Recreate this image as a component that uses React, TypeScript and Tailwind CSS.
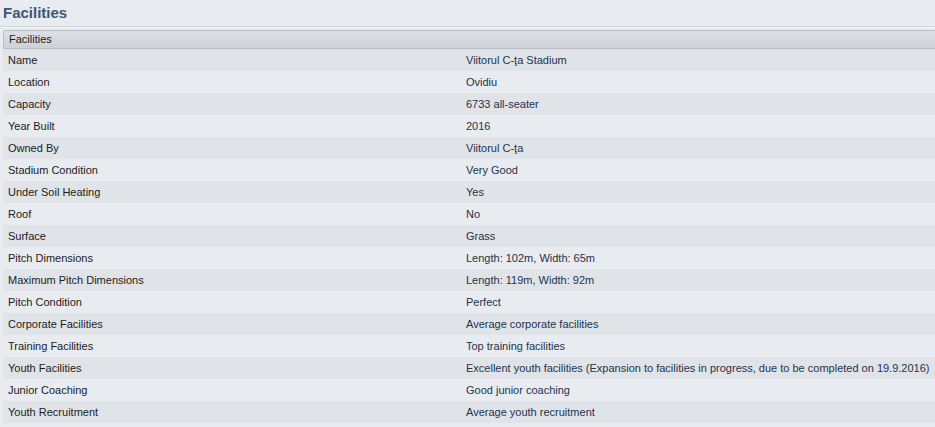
import React from 'react';

const rows: [string, string][] = [
    ['Name', 'Viitorul C-ţa Stadium'],
    ['Location', 'Ovidiu'],
    ['Capacity', '6733 all-seater'],
    ['Year Built', '2016'],
    ['Owned By', 'Viitorul C-ţa'],
    ['Stadium Condition', 'Very Good'],
    ['Under Soil Heating', 'Yes'],
    ['Roof', 'No'],
    ['Surface', 'Grass'],
    ['Pitch Dimensions', 'Length: 102m, Width: 65m'],
    ['Maximum Pitch Dimensions', 'Length: 119m, Width: 92m'],
    ['Pitch Condition', 'Perfect'],
    ['Corporate Facilities', 'Average corporate facilities'],
    ['Training Facilities', 'Top training facilities'],
    ['Youth Facilities', 'Excellent youth facilities (Expansion to facilities in progress, due to be completed on 19.9.2016)'],
    ['Junior Coaching', 'Good junior coaching'],
    ['Youth Recruitment', 'Average youth recruitment'],
];

export default function App() {
    return (
        <div className="w-[935px] h-[427px] overflow-hidden bg-[#e8ebef] font-['Liberation_Sans',Arial,sans-serif]">
            {/* Page title */}
            <div className="h-[27px] pl-[3px] pt-[4px] text-[15px] leading-[18px] font-bold text-[#3e5676] border-b border-[#d3d7dc]">
                Facilities
            </div>
            <div className="h-[3px] border-t border-[#f4f5f7]" />

            <div className="pl-[3px]">
                {/* Section header */}
                <div className="h-[19px] rounded-tl-[3px] border-t border-l border-b border-[#b9bdc4] bg-gradient-to-b from-[#dde0e5] to-[#cdd1d8] pl-[5px] text-[11px] leading-[17px] text-[#1c1c1c]">
                    Facilities
                </div>

                {rows.map(([label, value], i) => (
                    <div
                        key={label}
                        className={`flex h-[22px] items-center text-[11px] ${i % 2 === 0 ? 'bg-[#e0e3e7]' : 'bg-[#e8ebef]'}`}
                    >
                        <div className="w-[463px] shrink-0 pl-[5px] text-[#1c1c1c]">{label}</div>
                        <div className="whitespace-nowrap text-[#23344d]">{value}</div>
                    </div>
                ))}
            </div>
        </div>
    );
}
